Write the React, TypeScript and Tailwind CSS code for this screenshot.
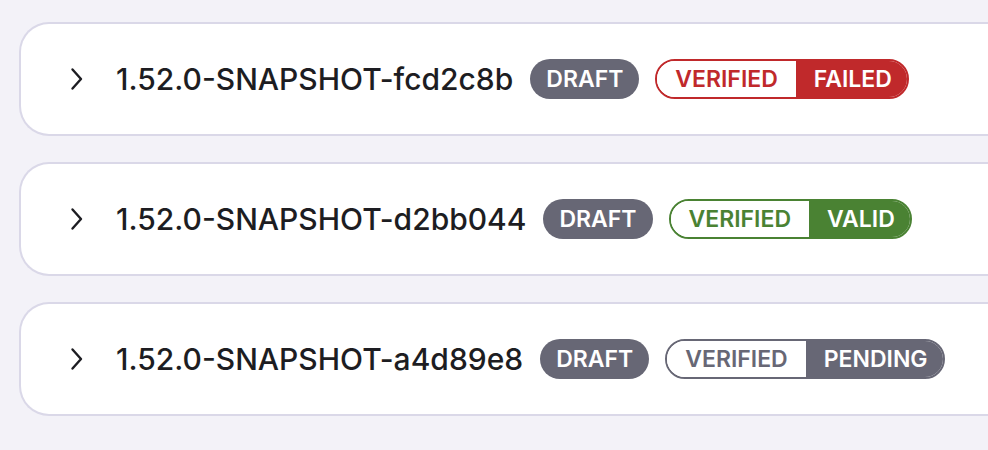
import { ReactNode } from 'react';

type Status = 'failed' | 'valid' | 'pending';

interface Release {
  version: string;
  status: Status;
}

const releases: Release[] = [
  { version: '1.52.0-SNAPSHOT-fcd2c8b', status: 'failed' },
  { version: '1.52.0-SNAPSHOT-d2bb044', status: 'valid' },
  { version: '1.52.0-SNAPSHOT-a4d89e8', status: 'pending' },
];

const statusStyles: Record<Status, { border: string; text: string; fill: string; label: string }> = {
  failed: { border: 'border-[#c0292b]', text: 'text-[#c0292b]', fill: 'bg-[#c0292b]', label: 'FAILED' },
  valid: { border: 'border-[#4a8233]', text: 'text-[#4a8233]', fill: 'bg-[#4a8233]', label: 'VALID' },
  pending: { border: 'border-[#676775]', text: 'text-[#676775]', fill: 'bg-[#676775]', label: 'PENDING' },
};

function Chevron() {
  return (
    <svg width="14" height="24" viewBox="0 0 14 24" fill="none" className="shrink-0">
      <polyline
        points="2.5,2.5 11,12 2.5,21.5"
        stroke="#1d1d22"
        strokeWidth="2.4"
        strokeLinecap="round"
        strokeLinejoin="round"
      />
    </svg>
  );
}

function Pill({ className, children }: { className: string; children: ReactNode }) {
  return (
    <span className={`flex h-[40px] items-center rounded-full text-[23px] font-semibold ${className}`}>
      {children}
    </span>
  );
}

function VerifiedBadge({ status }: { status: Status }) {
  const s = statusStyles[status];
  return (
    <span className={`flex h-[40px] overflow-hidden rounded-full border-2 text-[23px] font-semibold ${s.border}`}>
      <span className={`flex items-center bg-white pl-[18px] pr-[18px] ${s.text}`}>VERIFIED</span>
      <span className={`flex items-center pl-[18px] pr-[15px] text-white ${s.fill}`}>{s.label}</span>
    </span>
  );
}

function ReleaseRow({ release }: { release: Release }) {
  return (
    <div className="flex h-[114px] items-center rounded-l-[30px] border-2 border-r-0 border-[#dad8e8] bg-white pl-[49px]">
      <Chevron />
      <span className="ml-[32px] text-[30px] font-medium text-[#1d1d22]">{release.version}</span>
      <Pill className="ml-[17px] bg-[#676775] px-[16px] text-white">DRAFT</Pill>
      <span className="ml-[16px]">
        <VerifiedBadge status={release.status} />
      </span>
    </div>
  );
}

export default function App() {
  return (
    <div
      className="flex min-h-[450px] w-full flex-col gap-[26px] bg-[#f3f2f8] pl-[19px] pt-[22px]"
      style={{ fontFamily: 'Inter, "Noto Sans", sans-serif' }}
    >
      {releases.map((r) => (
        <ReleaseRow key={r.version} release={r} />
      ))}
    </div>
  );
}
